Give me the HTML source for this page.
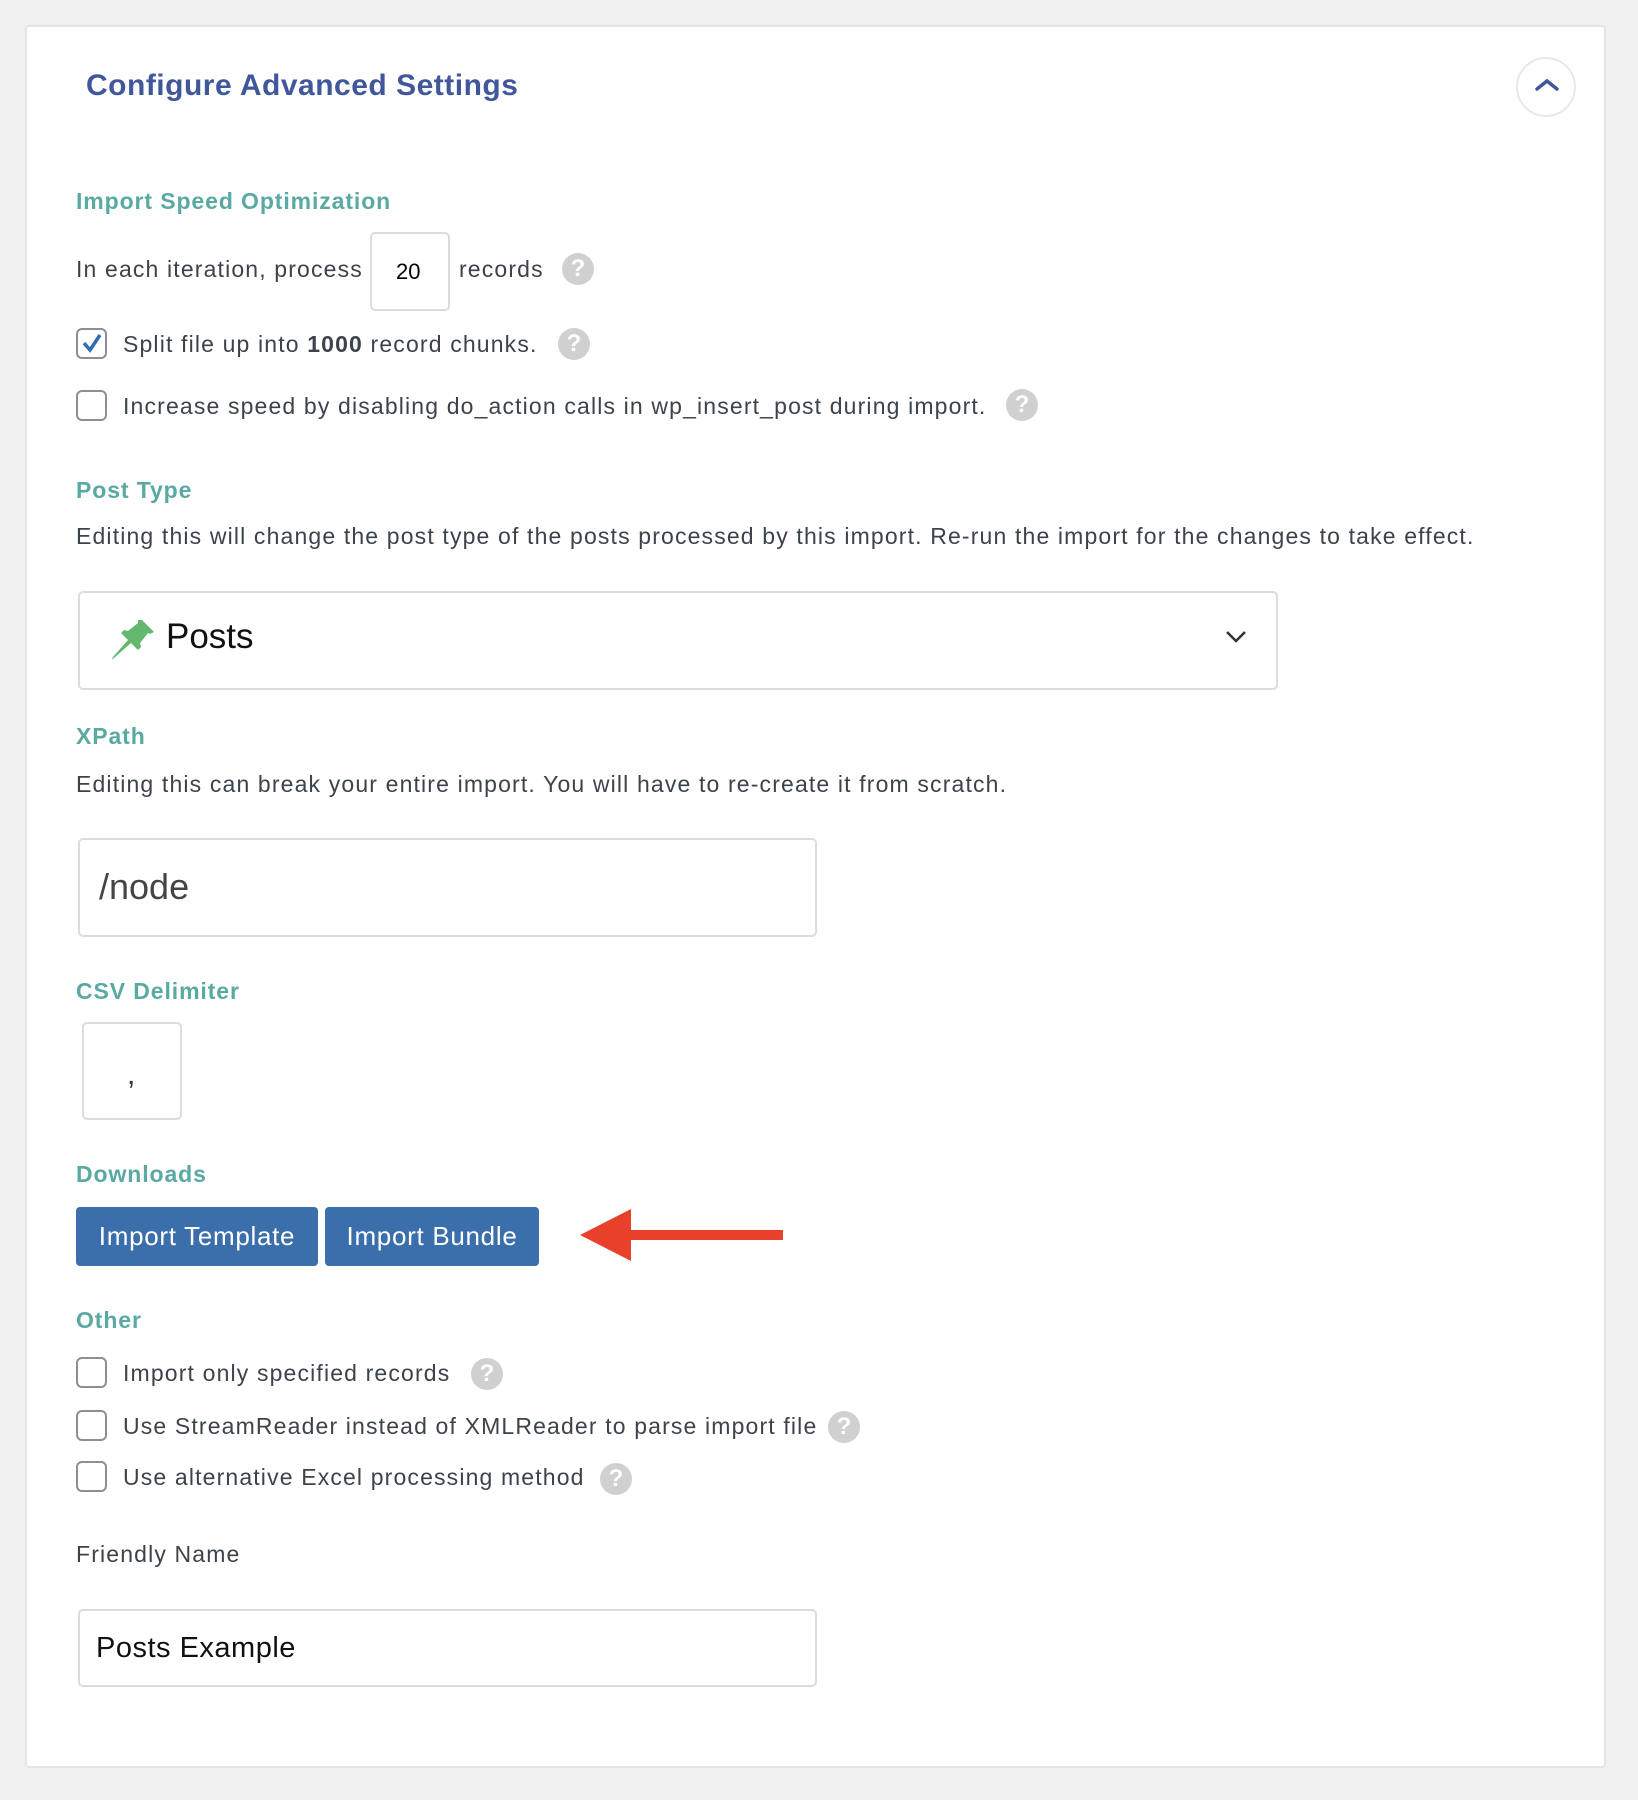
<!DOCTYPE html>
<html><head><meta charset="utf-8"><style>
body{margin:0;width:1638px;height:1800px;background:#f0f0f1;font-family:"Liberation Sans",sans-serif;color:#3c434a;position:relative;overflow:hidden}
.a{position:absolute;white-space:nowrap}
.card{position:absolute;left:25px;top:25px;width:1581px;height:1743px;background:#fff;border:2px solid #e2e4e7;border-radius:4px;box-sizing:border-box}
.h{color:#5aa9a3;font-weight:bold;font-size:23px;letter-spacing:0.9px;left:76px}
.t{font-size:23px;letter-spacing:1.15px;color:#3c434a}
.cb{position:absolute;left:76px;width:31px;height:31px;border:2px solid #8c8f94;border-radius:6px;box-sizing:border-box;background:#fff}
.q{position:absolute;width:32px;height:32px;border-radius:50%;background:#d0d0d0;color:#fff;font-weight:bold;font-size:24px;text-align:center;line-height:32px}
.box{position:absolute;border:2px solid #dcdcde;border-radius:5px;box-sizing:border-box;background:#fff}
.btn{position:absolute;top:1207px;height:59px;background:#3b6fab;color:#fff;font-size:26px;letter-spacing:0.7px;border-radius:4px;text-align:center;line-height:59px}
</style></head><body>
<div class="card"></div>
<div class="a" style="left:86px;top:69px;font-size:30px;letter-spacing:0.5px;font-weight:bold;color:#40579b">Configure Advanced Settings</div>
<div class="a" style="left:1516px;top:57px;width:56px;height:56px;border:2px solid #e8e8ea;border-radius:50%"></div>
<svg class="a" style="left:1532px;top:76px" width="30" height="20"><path d="M5 13 L15 5 L25 13" stroke="#40579b" stroke-width="3.5" fill="none" stroke-linecap="round"/></svg>

<div class="a h" style="top:188px">Import Speed Optimization</div>
<div class="a t" style="left:76px;top:256px">In each iteration, process</div>
<div class="box" style="left:370px;top:232px;width:80px;height:79px"></div>
<div class="a" style="left:396px;top:259px;font-size:22px;color:#000">20</div>
<div class="a t" style="left:459px;top:256px">records</div>
<div class="q" style="left:562px;top:253px">?</div>

<div class="cb" style="top:328px"></div>
<svg class="a" style="left:80px;top:331px" width="24" height="24"><path d="M4 12 L10 19 L20 4" stroke="#2f6cb5" stroke-width="3.5" fill="none"/></svg>
<div class="a t" style="left:123px;top:331px">Split file up into <b>1000</b> record chunks.</div>
<div class="q" style="left:558px;top:328px">?</div>

<div class="cb" style="top:390px"></div>
<div class="a t" style="left:123px;top:393px">Increase speed by disabling do_action calls in wp_insert_post during import.</div>
<div class="q" style="left:1006px;top:389px">?</div>

<div class="a h" style="top:477px">Post Type</div>
<div class="a t" style="left:76px;top:523px">Editing this will change the post type of the posts processed by this import. Re-run the import for the changes to take effect.</div>
<div class="box" style="left:78px;top:591px;width:1200px;height:99px"></div>
<svg class="a" style="left:108px;top:616px" width="48" height="48" viewBox="0 0 48 48"><path d="M34 4 L46 16 L42 18 L40 17 L32 27 L33 31 L30 34 L23 27 L6 42 L4 44 L5 41 L20 24 L13 17 L16 14 L20 15 L30 7 L30 4 Z" fill="#64b86e"/></svg>
<div class="a" style="left:166px;top:617px;font-size:35px;color:#111">Posts</div>
<svg class="a" style="left:1223px;top:627px" width="26" height="20"><path d="M4 5 L13 14 L22 5" stroke="#333" stroke-width="2.5" fill="none"/></svg>

<div class="a h" style="top:723px">XPath</div>
<div class="a t" style="left:76px;top:771px">Editing this can break your entire import. You will have to re-create it from scratch.</div>
<div class="box" style="left:78px;top:838px;width:739px;height:99px"></div>
<div class="a" style="left:99px;top:866px;font-size:36px;color:#444">/node</div>

<div class="a h" style="top:978px">CSV Delimiter</div>
<div class="box" style="left:82px;top:1022px;width:100px;height:98px"></div>
<div class="a" style="left:127px;top:1058px;font-size:30px;color:#333">,</div>

<div class="a h" style="top:1161px">Downloads</div>
<div class="btn" style="left:76px;width:242px">Import Template</div>
<div class="btn" style="left:325px;width:214px">Import Bundle</div>
<svg class="a" style="left:575px;top:1205px" width="215" height="60"><path d="M5 30 L56 4 L56 25 L208 25 L208 35 L56 35 L56 56 Z" fill="#e8402a"/></svg>

<div class="a h" style="top:1307px">Other</div>
<div class="cb" style="top:1357px"></div>
<div class="a t" style="left:123px;top:1360px">Import only specified records</div>
<div class="q" style="left:471px;top:1358px">?</div>
<div class="cb" style="top:1410px"></div>
<div class="a t" style="left:123px;top:1413px">Use StreamReader instead of XMLReader to parse import file</div>
<div class="q" style="left:828px;top:1411px">?</div>
<div class="cb" style="top:1461px"></div>
<div class="a t" style="left:123px;top:1464px">Use alternative Excel processing method</div>
<div class="q" style="left:600px;top:1463px">?</div>

<div class="a t" style="left:76px;top:1541px">Friendly Name</div>
<div class="box" style="left:78px;top:1609px;width:739px;height:78px"></div>
<div class="a" style="left:96px;top:1632px;font-size:29px;letter-spacing:0.5px;color:#111">Posts Example</div>
</body></html>
